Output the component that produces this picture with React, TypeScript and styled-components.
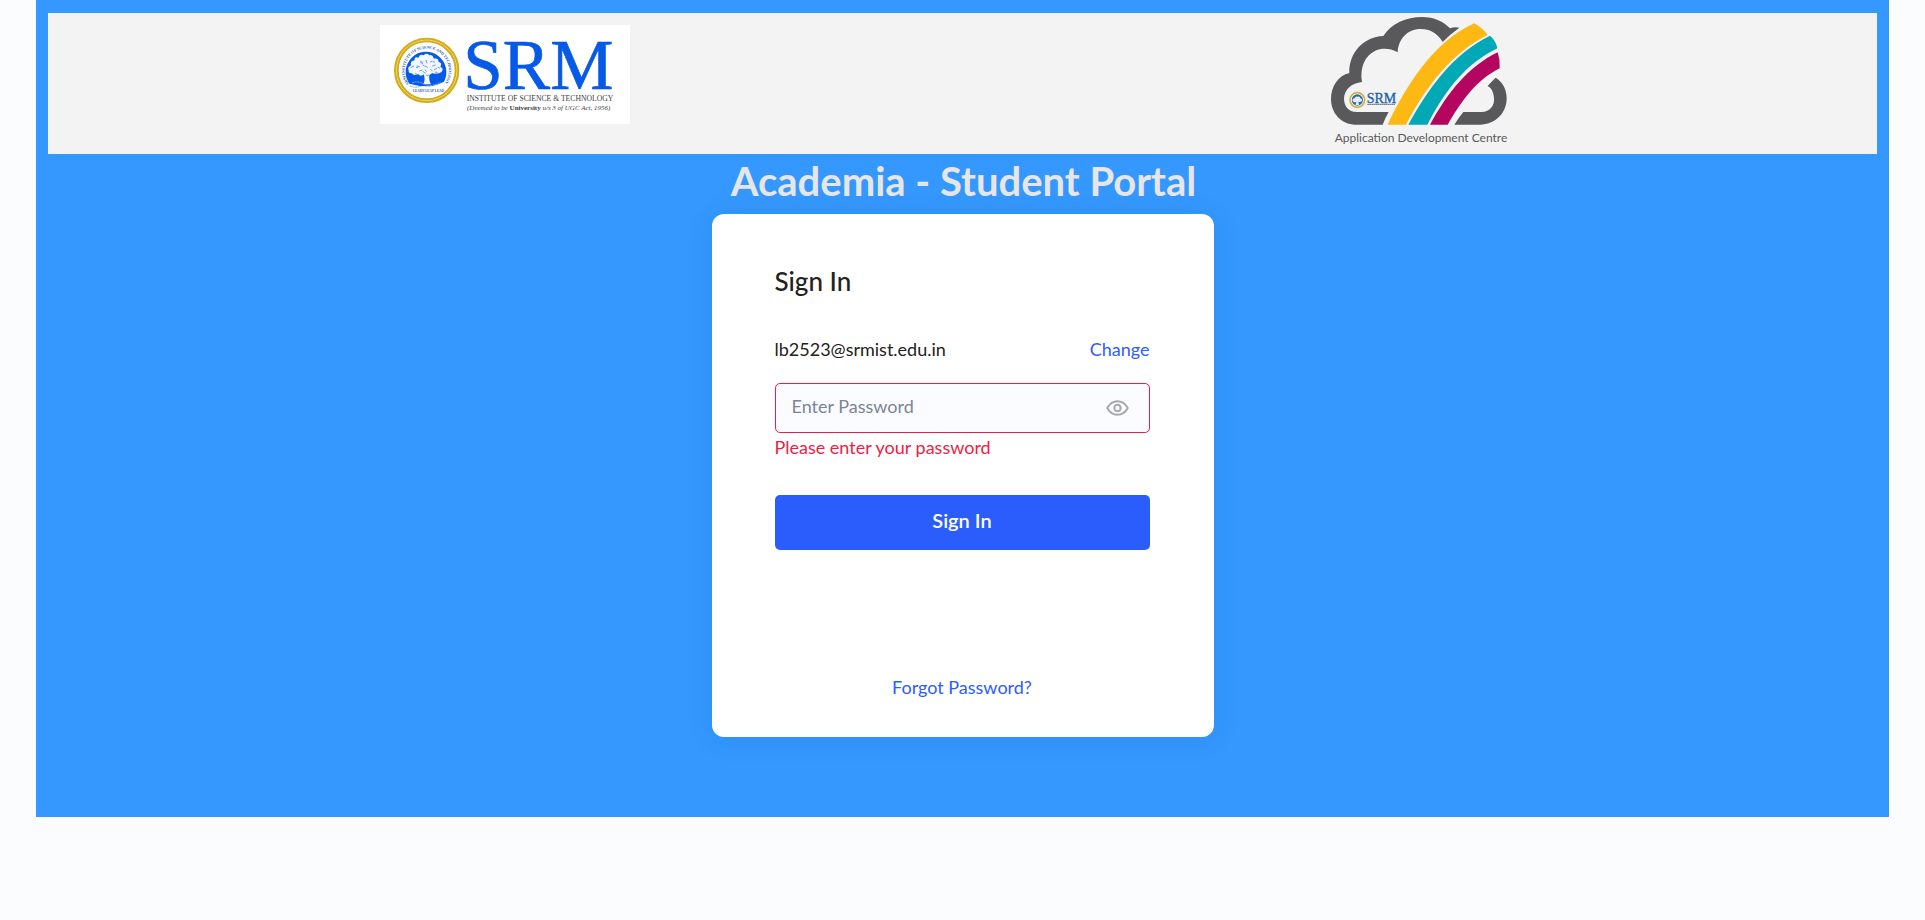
import React, { useId, useState } from "react";
import styled, { createGlobalStyle } from "styled-components";

const GlobalStyle = createGlobalStyle`
  *, *::before, *::after { box-sizing: border-box; }
  body {
    margin: 0;
    background: #fbfcfe;
    color: #222;
    font-family: Lato, "Liberation Sans", sans-serif;
    font-size: 18px;
    line-height: 24px;
  }
`;

const Page = styled.div`
  margin: 0 36px;
  padding: 13px 12px 80px;
  background: #3498ff;
`;

const Header = styled.header`
  display: grid;
  grid-template-columns: 1fr 1fr;
  justify-items: center;
  background: #f3f3f3;
  svg { display: block; }
`;

const InstituteSlot = styled.div`
  padding-top: 12px;
`;

const Title = styled.h1`
  margin: 0;
  padding: 3px 0 9px 2px;
  color: #e6e6e6;
  font-size: 40px;
  font-weight: 700;
  line-height: 48px;
  text-align: center;
`;

const Card = styled.form`
  display: flex;
  flex-direction: column;
  max-width: 502px;
  margin: 0 auto;
  padding: 51px 64px 38px 63px;
  border-radius: 12px;
  background: #fff;
  box-shadow: 0 2px 30px rgba(0, 0, 0, 0.08);
`;

const Heading = styled.h2`
  margin: 0 0 40px;
  font-size: 26px;
  font-weight: 500;
  line-height: 32px;
`;

const AccountRow = styled.div`
  display: flex;
  justify-content: space-between;
  margin-bottom: 22px;
`;

const TextLink = styled.a`
  color: #2b5cff;
  text-decoration: none;
`;

const Field = styled.div`
  display: flex;
  align-items: center;
  height: 50px;
  padding: 0 20px 0 16px;
  border: 1px solid #ee1d43;
  border-radius: 5px;
  background: #fafcff;
`;

const PasswordInput = styled.input`
  flex: 1;
  min-width: 0;
  height: 100%;
  padding: 0 0 4px;
  border: 0;
  outline: 0;
  background: transparent;
  color: #222;
  font: inherit;
  &::placeholder { color: #7c8495; opacity: 1; }
`;

const RevealButton = styled.button`
  display: flex;
  padding: 0;
  border: 0;
  background: none;
  color: #a8a8a8;
  cursor: pointer;
`;

const ErrorText = styled.p`
  margin: 2px 0 36px;
  color: #ee1d43;
`;

const SubmitButton = styled.button`
  height: 55px;
  margin-bottom: 125px;
  padding: 0 0 5px;
  border: 0;
  border-radius: 5px;
  background: #2b5cfc;
  color: #fff;
  font: inherit;
  font-size: 20px;
  font-weight: 600;
  cursor: pointer;
`;

const ForgotLink = styled(TextLink)`
  align-self: center;
`;

const serif = '"Liberation Serif", serif';

function InstituteLogo() {
  const ring = useId();
  return (
    <svg width="250" height="99" viewBox="0 0 750 297" role="img" aria-label="SRM Institute of Science and Technology">
      <rect width="750" height="297" fill="#fff" />
      <circle cx="140" cy="136" r="91" fill="#fff" stroke="#d1ac18" strokeWidth="14" />
      <circle cx="140" cy="136" r="91" fill="none" stroke="#ecd774" strokeWidth="3" />
      <path d="M88 176 A61 61 0 1 1 192 170 Q164 184 140 184 T88 176Z" fill="#0759e8" />
      <path
        d="M84 138 Q78 126 90 120 Q88 106 101 104 Q102 92 114 95 Q118 84 130 88 Q140 80 149 88 Q160 86 163 98 Q178 96 178 109 Q190 113 184 124 Q196 132 186 143 Q174 152 157 147 L150 152 Q148 166 156 180 L126 180 Q134 166 130 152 Q120 158 114 150 Q100 156 94 147 Q82 146 84 138Z"
        fill="#f1f6ff"
        stroke="#0759e8"
        strokeWidth="5"
      />
      <path
        d="M92 128l10-5m6 6l7-5m3 14l9-3m-7-24l9 6m9-12l3 10m9-3l7-4m0 15l10-3m4 9l-9 6m-27-12l8 4m-15 12l9 6m15-12l6 6m6 6l7-3m-66 3l7 4m26 2h8m-34-28l7 2m2-16l8 3m-19 12l4 5m44-20l7 3m8 14l7 4m-13 10l6 4m-38-10l5 6m-12-20l6 3"
        stroke="#6c9df0" strokeWidth="3" fill="none"
      />
      <path d="M96 174q16-8 36 3t50-6M90 182q14 8 34 2" stroke="#7fa6e8" strokeWidth="3" fill="none" strokeDasharray="6 2" />
      <path id={ring} d="M87 176 A66 66 0 1 1 193 176" fill="none" />
      <text fill="#2158b8" fontFamily={serif} fontSize="12" fontWeight="700">
        <textPath href={`#${ring}`}>SRM INSTITUTE OF SCIENCE AND TECHNOLOGY</textPath>
      </text>
      <text x="98" y="201" fill="#2158b8" fontFamily={serif} fontSize="10" fontWeight="700">LEARN LEAP LEAD</text>
      <text x="250" y="191" fill="#0759e8" stroke="#0759e8" strokeWidth="2" fontFamily={serif} fontSize="213">SRM</text>
      <text x="260" y="229" fill="#3d3d42" fontFamily={serif} fontSize="23">
        INSTITUTE OF SCIENCE &amp; TECHNOLOGY
      </text>
      <text x="261" y="254" fill="#3d3d42" fontFamily={serif} fontSize="21" fontStyle="italic">
        (Deemed to be <tspan fontStyle="normal" fontWeight="700">University</tspan> u/s 3 of UGC Act, 1956)
      </text>
    </svg>
  );
}

function CentreLogo() {
  return (
    <svg width="180" height="141" viewBox="30 24 540 423" role="img" aria-label="Application Development Centre">
      <g fill="#59595b">
        <path d="M188 359 H105 C65 359 33 325 33 283 C33 243 55 212 88 204 C86 145 130 95 190 93 C213 56 260 36 305 36 C343 36 371 50 390 70 Q405 64 418 68 Q390 88 368 111 C352 84 330 72 302 72 C262 72 235 102 233 142 C210 129 186 129 166 137 C134 152 119 188 126 231 C95 235 73 252 72 281 C72 305 88 321 110 321 H206 Q196 338 188 359Z" />
        <path d="M527 218 C549 231 560 255 560 280 C560 325 525 359 480 359 H403 Q416 338 430 321 H485 C510 321 524 302 522 280 C521 262 515 250 503 243 Q514 230 527 218Z" />
      </g>
      <path d="M203 359 C260 240 340 110 463 55 Q487 69 503 90 C400 140 320 240 258 359Z" fill="#fdb813" />
      <path d="M265 359 C325 250 400 145 510 92 Q528 108 532 130 C440 176 382 245 322 359Z" fill="#00a9b5" />
      <path d="M330 359 C385 260 445 185 533 142 Q541 165 539 190 C470 225 430 280 383 359Z" fill="#b4065f" />
      <circle cx="112" cy="285" r="22" fill="#fff" stroke="#cdb04c" strokeWidth="5" />
      <circle cx="112" cy="285" r="17" fill="#2f69ae" />
      <path d="M98 288q-2-8 6-8q2-8 9-5q8-2 8 5q8 2 4 9q-5 4-10 1l2 10h-10l2-10q-7 4-11-2Z" fill="#e5edf7" />
      <text x="140" y="293" fill="#2161ac" stroke="#2161ac" strokeWidth="1" fontFamily={serif} fontSize="42">SRM</text>
      <path d="M142 298H226" stroke="#5c6670" strokeWidth="3" strokeDasharray="5 1" />
      <text x="44" y="410" fill="#59595b" fontFamily="Lato, sans-serif" fontSize="36">
        Application Development Centre
      </text>
    </svg>
  );
}

function EyeIcon() {
  return (
    <svg width="23" height="16" viewBox="0 0 23 16" fill="none" stroke="currentColor" strokeWidth="2" aria-hidden="true">
      <path d="M1.2 8 C3.8 3.4 7.2 1.2 11.5 1.2 S19.2 3.4 21.8 8 C19.2 12.6 15.8 14.8 11.5 14.8 S3.8 12.6 1.2 8Z" strokeLinejoin="round" />
      <circle cx="11.5" cy="8" r="3.2" />
    </svg>
  );
}

export default function App() {
  const [visible, setVisible] = useState(false);
  return (
    <>
      <GlobalStyle />
      <Page>
        <Header>
          <InstituteSlot>
            <InstituteLogo />
          </InstituteSlot>
          <CentreLogo />
        </Header>
        <main>
          <Title>Academia - Student Portal</Title>
          <Card noValidate onSubmit={(e) => e.preventDefault()}>
            <Heading>Sign In</Heading>
            <AccountRow>
              <span>lb2523@srmist.edu.in</span>
              <TextLink href="#change">Change</TextLink>
            </AccountRow>
            <Field>
              <PasswordInput
                type={visible ? "text" : "password"}
                placeholder="Enter Password"
                aria-label="Enter Password"
                aria-invalid="true"
                aria-describedby="password-error"
              />
              <RevealButton type="button" aria-label="Show password" onClick={() => setVisible(!visible)}>
                <EyeIcon />
              </RevealButton>
            </Field>
            <ErrorText id="password-error">Please enter your password</ErrorText>
            <SubmitButton type="submit">Sign In</SubmitButton>
            <ForgotLink href="#forgot">Forgot Password?</ForgotLink>
          </Card>
        </main>
      </Page>
    </>
  );
}
